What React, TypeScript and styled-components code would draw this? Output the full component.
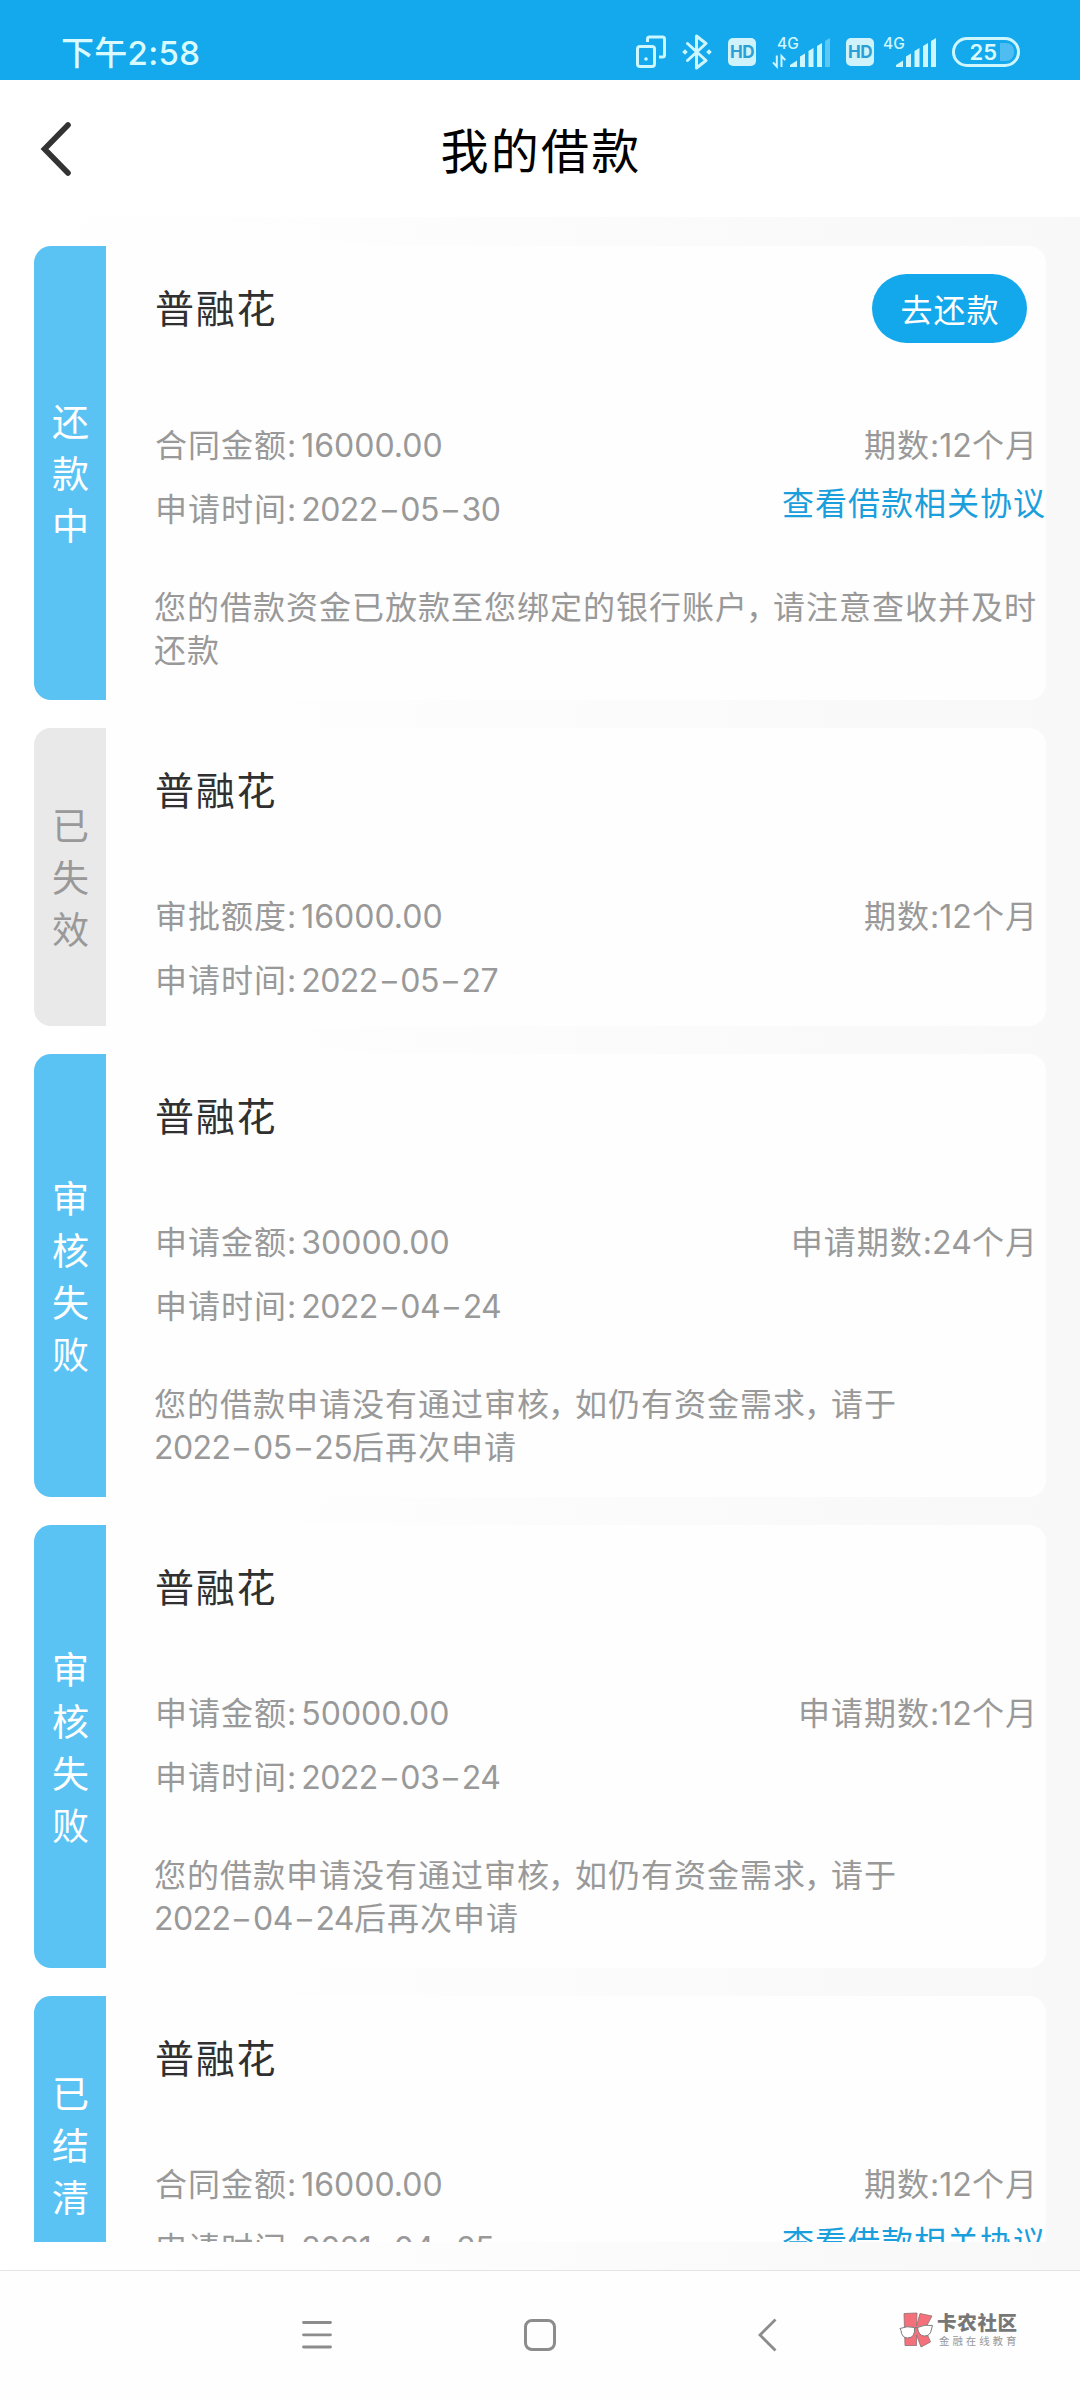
import React from 'react';
import styled, { createGlobalStyle } from 'styled-components';

const GlobalStyle = createGlobalStyle`
  * { box-sizing: border-box; }
  body {
    margin: 0;
    font-family: Inter, "Noto Sans CJK SC", sans-serif;
    background: #fff;
  }
`;

const Screen = styled.div`
  display: flex;
  flex-direction: column;
  width: 1080px;
  height: 2400px;
  overflow: hidden;
  background: linear-gradient(90deg, #ffffff 0%, #fdfdfd 35%, #fafafa 70%, #f8f8f8 100%);
`;

const StatusBar = styled.header`
  display: flex;
  justify-content: space-between;
  height: 80px;
  padding: 24px 60px 0 61px;
  background: #13a9ec;
  color: #d9fbff;
`;

const Clock = styled.time`
  height: 56px;
  font-size: 33px;
  font-weight: 500;
  line-height: 58px;
  letter-spacing: 0.3px;
`;

const StatusIcons = styled.div`
  display: flex;
  align-items: center;
  height: 56px;
`;

const StatusItem = styled.span<{ $gap?: number }>`
  display: flex;
  margin-left: ${(p) => p.$gap ?? 16}px;
`;

const HdBadge = styled.span`
  display: flex;
  align-items: center;
  justify-content: center;
  width: 28px;
  height: 28px;
  border-radius: 5px;
  background: #d0f3fb;
  color: #2ba0d6;
  font-size: 17px;
  font-weight: 700;
  letter-spacing: -0.6px;
`;

const Battery = styled.span`
  display: flex;
  align-items: center;
  justify-content: flex-end;
  width: 68px;
  height: 30px;
  padding-right: 3px;
  border: 3px solid #cdf6ff;
  border-radius: 15px;
  font-size: 22px;
  font-weight: 600;
  letter-spacing: 0;
`;

const BatteryRest = styled.span`
  width: 14px;
  height: 18px;
  margin-left: 3px;
  border-radius: 0 8px 8px 0;
  background: #4fbdf2;
`;

const TitleBar = styled.div`
  display: grid;
  grid-template-columns: 120px 1fr 120px;
  align-items: center;
  height: 137px;
  background: #fff;
`;

const BackButton = styled.button`
  display: flex;
  margin: 0;
  padding: 1px 0 0 40px;
  border: 0;
  background: none;
`;

const PageTitle = styled.h1`
  margin: 0;
  padding: 6px 0 0 2px;
  color: #000;
  font-size: 48px;
  font-weight: 400;
  line-height: 64px;
  letter-spacing: 2.2px;
  text-align: center;
`;

const LoanList = styled.main`
  display: flex;
  flex-direction: column;
  gap: 28px;
  height: 1996px;
  margin: 29px 34px 28px;
  overflow: hidden;
`;

const Card = styled.article`
  display: flex;
  flex-shrink: 0;
  border-radius: 17px;
  overflow: hidden;
  background: #fefefe;
`;

const StatusTab = styled.div<{ $muted?: boolean }>`
  display: flex;
  flex-direction: column;
  align-items: center;
  justify-content: center;
  width: 72px;
  padding: 4px 0 0 1px;
  background: ${(p) => (p.$muted ? '#e9e9e9' : '#5ac3f4')};
  color: ${(p) => (p.$muted ? '#999' : '#fff')};
  font-size: 37px;
  line-height: 52px;
`;

const CardBody = styled.div`
  flex: 1;
  padding: 28px 0 14px 49px;
`;

const CardHead = styled.div<{ $tall: boolean }>`
  display: flex;
  justify-content: space-between;
  height: ${(p) => (p.$tall ? 69 : 58)}px;
  padding-right: 19px;
`;

const Product = styled.h2`
  margin: 0;
  color: #303030;
  font-size: 39px;
  font-weight: 400;
  line-height: 69px;
  letter-spacing: 1.8px;
`;

const RepayButton = styled.button`
  width: 155px;
  height: 69px;
  padding: 0 0 2px 1px;
  border: 0;
  border-radius: 35px;
  background: #13a8ec;
  color: #fff;
  font: inherit;
  font-size: 32px;
  letter-spacing: 1px;
`;

const Details = styled.div`
  display: flex;
  justify-content: space-between;
  height: 127px;
  margin-top: 71px;
  color: #999;
  font-size: 32px;
  line-height: 64px;
  letter-spacing: 1px;
  white-space: nowrap;
`;

const Column = styled.div<{ $end?: boolean }>`
  display: flex;
  flex-direction: column;
  align-items: ${(p) => (p.$end ? 'flex-end' : 'flex-start')};
`;

const Field = styled.div`
  display: flex;
  gap: 4px;
`;

const Value = styled.span`
  letter-spacing: 0;
`;

const DateValue = styled.span`
  letter-spacing: -0.6px;
`;

const Dash = styled.span`
  display: inline-block;
  margin: 0 4px;
  letter-spacing: 0;
  transform: scaleX(1.45);
`;

const Period = styled.div`
  padding-right: 8px;
`;

const Months = styled.span`
  letter-spacing: 0.1px;
`;

const AgreementLink = styled.a`
  color: #1b9fdc;
  line-height: 52px;
`;

const Notice = styled.div`
  margin: 45px 0 0 -1px;
  padding-bottom: 14px;
  color: #999;
  font-size: 32px;
  line-height: 43px;
  letter-spacing: 1px;
  white-space: nowrap;
`;

const Comma = styled.span`
  margin-left: -2px;
  letter-spacing: -5px;
`;

const NavBar = styled.nav`
  display: flex;
  align-items: center;
  height: 130px;
  padding: 0 0 2px 301px;
  border-top: 1px solid #e4e4e4;
  background: #fefefe;
`;

const NavItem = styled.span<{ $gap?: number }>`
  display: flex;
  margin-left: ${(p) => p.$gap ?? 0}px;
`;

const Brand = styled.div`
  display: flex;
  gap: 3px;
  height: 36px;
  margin: 0 0 9px 122px;
`;

const BrandText = styled.div`
  display: flex;
  flex-direction: column;
  white-space: nowrap;
`;

const BrandName = styled.strong`
  color: #777;
  font-size: 19.5px;
  font-weight: 900;
  line-height: 22px;
  letter-spacing: 0.7px;
`;

const BrandTagline = styled.span`
  padding: 1px 0 0 2px;
  color: #999;
  font-size: 10.5px;
  line-height: 13px;
  letter-spacing: 2.9px;
`;

const CopyIcon = () => (
  <svg width="30" height="34" viewBox="0 0 30 34" fill="none" stroke="#cdf6ff" strokeWidth="3">
    <rect x="1.5" y="11.5" width="17" height="20" rx="2.5" />
    <path d="M11.5 7V4a2 2 0 0 1 2-2H26.5a2 2 0 0 1 2 2V20a2 2 0 0 1-2 2H23" />
    <circle cx="10" cy="24" r="1.8" fill="#cdf6ff" stroke="none" />
  </svg>
);

const BluetoothIcon = () => (
  <svg width="30" height="36" viewBox="0 0 30 36" fill="none" stroke="#cdf6ff" strokeWidth="3" strokeLinejoin="round" strokeLinecap="round">
    <path d="M5.5 9.5L24 26.5L14.5 34V2L24 9.5L5.5 26.5" />
    <path d="M3 15.2L5.8 18L3 20.8L0.2 18ZM27 15.2L29.8 18L27 20.8L24.2 18Z" fill="#cdf6ff" stroke="none" />
  </svg>
);

const SignalIcon = ({ x, width, arrows }: { x: number; width: number; arrows?: boolean }) => (
  <svg width={width} height="34" viewBox={`0 0 ${width} 34`} fill="#cdf6ff">
    <text x={arrows ? 5 : 0} y="13.5" fontSize="15.5" fontWeight="500" fontFamily="Inter, sans-serif">4G</text>
    {arrows && (
      <path d="M4.8 20.5v11l-3.8-4.2M9.5 32V21l3.8 4.2" fill="none" stroke="#cdf6ff" strokeWidth="2" />
    )}
    <g transform={`translate(${x} 0)`}>
      <path d="M0 32v-2L7 25.5V32Z" />
      <path d="M10 32V21.5L15 18.5V32Z" />
      <path d="M18.5 32V16L23.5 13V32Z" />
      <path d="M27 32V11L32 8V32Z" />
      <path d="M35 32V6L40 3V32Z" opacity={arrows ? 0.4 : 1} />
    </g>
  </svg>
);

const BrandMark = () => (
  <svg width="35" height="36" viewBox="0 0 35 36">
    <path
      d="M5 1.5L18 1L17.5 14L21 1.5L33 4L26 17L31.5 30L22 35L17.5 23V33.5H6Z"
      fill="#f4717c" stroke="#8d7074" strokeWidth="0.8"
    />
    <g fill="#fff" stroke="#7d7d7d" strokeWidth="1">
      <path d="M1 16.5Q8 13.5 15.5 15.5Q16.5 26 8.5 26Q2.5 25.5 2 18.5Z" />
      <path d="M18.5 15.5Q26 12 33.5 13.5L32.5 17Q31.5 24 25.5 24Q19.5 24 18.5 15.5Z" />
      <path d="M15.5 16.5Q17 14.5 18.5 16" fill="none" />
    </g>
  </svg>
);

interface Loan {
  status: string;
  muted?: boolean;
  amountLabel: string;
  amount: string;
  date: string;
  periodLabel: string;
  months: number;
  repay?: boolean;
  agreement?: boolean;
  notice?: React.ReactNode;
}

const DateText = ({ value }: { value: string }) => (
  <DateValue>
    {value.split('-').map((part, i) => (
      <React.Fragment key={i}>
        {i > 0 && <Dash>-</Dash>}
        {part}
      </React.Fragment>
    ))}
  </DateValue>
);

const RejectedNotice = ({ until }: { until: string }) => (
  <>
    <div>您的借款申请没有通过审核<Comma>，</Comma>如仍有资金需求<Comma>，</Comma>请于</div>
    <div><DateText value={until} />后再次申请</div>
  </>
);

const PaidOutNotice = () => (
  <>
    <div>您的借款资金已放款至您绑定的银行账户<Comma>，</Comma>请注意查收并及时</div>
    <div>还款</div>
  </>
);

const loans: Loan[] = [
  {
    status: '还款中', amountLabel: '合同金额:', amount: '16000.00', date: '2022-05-30',
    periodLabel: '期数', months: 12, repay: true, agreement: true, notice: <PaidOutNotice />,
  },
  {
    status: '已失效', muted: true, amountLabel: '审批额度:', amount: '16000.00', date: '2022-05-27',
    periodLabel: '期数', months: 12,
  },
  {
    status: '审核失败', amountLabel: '申请金额:', amount: '30000.00', date: '2022-04-24',
    periodLabel: '申请期数', months: 24, notice: <RejectedNotice until="2022-05-25" />,
  },
  {
    status: '审核失败', amountLabel: '申请金额:', amount: '50000.00', date: '2022-03-24',
    periodLabel: '申请期数', months: 12, notice: <RejectedNotice until="2022-04-24" />,
  },
  {
    status: '已结清', amountLabel: '合同金额:', amount: '16000.00', date: '2021-04-25',
    periodLabel: '期数', months: 12, agreement: true,
  },
];

const LoanCard = ({ loan }: { loan: Loan }) => (
  <Card>
    <StatusTab $muted={loan.muted}>
      {loan.status.split('').map((ch, i) => (
        <span key={i}>{ch}</span>
      ))}
    </StatusTab>
    <CardBody>
      <CardHead $tall={!!loan.repay}>
        <Product>普融花</Product>
        {loan.repay && <RepayButton>去还款</RepayButton>}
      </CardHead>
      <Details>
        <Column>
          <Field>{loan.amountLabel}<Value>{loan.amount}</Value></Field>
          <Field>申请时间:<DateText value={loan.date} /></Field>
        </Column>
        <Column $end>
          <Period>{loan.periodLabel}<Months>:{loan.months}</Months>个月</Period>
          {loan.agreement && <AgreementLink>查看借款相关协议</AgreementLink>}
        </Column>
      </Details>
      {loan.notice && <Notice>{loan.notice}</Notice>}
    </CardBody>
  </Card>
);

export default function App() {
  return (
    <Screen>
      <GlobalStyle />
      <StatusBar>
        <Clock>下午2:58</Clock>
        <StatusIcons>
          <StatusItem><CopyIcon /></StatusItem>
          <StatusItem><BluetoothIcon /></StatusItem>
          <StatusItem><HdBadge>HD</HdBadge></StatusItem>
          <StatusItem><SignalIcon x={18} width={58} arrows /></StatusItem>
          <StatusItem><HdBadge>HD</HdBadge></StatusItem>
          <StatusItem $gap={9}><SignalIcon x={13} width={53} /></StatusItem>
          <StatusItem>
            <Battery>25<BatteryRest /></Battery>
          </StatusItem>
        </StatusIcons>
      </StatusBar>
      <TitleBar>
        <BackButton aria-label="返回">
          <svg width="34" height="56" viewBox="0 0 34 56" fill="none" stroke="#333" strokeWidth="5.6" strokeLinecap="round">
            <path d="M28 4L4.5 28L28 52" />
          </svg>
        </BackButton>
        <PageTitle>我的借款</PageTitle>
      </TitleBar>
      <LoanList>
        {loans.map((loan, i) => (
          <LoanCard key={i} loan={loan} />
        ))}
      </LoanList>
      <NavBar>
        <NavItem>
          <svg width="32" height="32" viewBox="0 0 32 32" stroke="#8c8c8c" strokeWidth="2.8" strokeLinecap="round">
            <path d="M2.5 3.5H29.5M2.5 15.8H29.5M2.5 28H29.5" />
          </svg>
        </NavItem>
        <NavItem $gap={191}>
          <svg width="32" height="32" viewBox="0 0 32 32" fill="none" stroke="#8c8c8c" strokeWidth="3">
            <rect x="1.5" y="1.5" width="29" height="29" rx="6.5" />
          </svg>
        </NavItem>
        <NavItem $gap={201}>
          <svg width="20" height="34" viewBox="0 0 20 34" fill="none" stroke="#8c8c8c" strokeWidth="2.8">
            <path d="M18.5 1.5L3 17L18.5 32.5" />
          </svg>
        </NavItem>
        <Brand>
          <BrandMark />
          <BrandText>
            <BrandName>卡农社区</BrandName>
            <BrandTagline>金融在线教育</BrandTagline>
          </BrandText>
        </Brand>
      </NavBar>
    </Screen>
  );
}
